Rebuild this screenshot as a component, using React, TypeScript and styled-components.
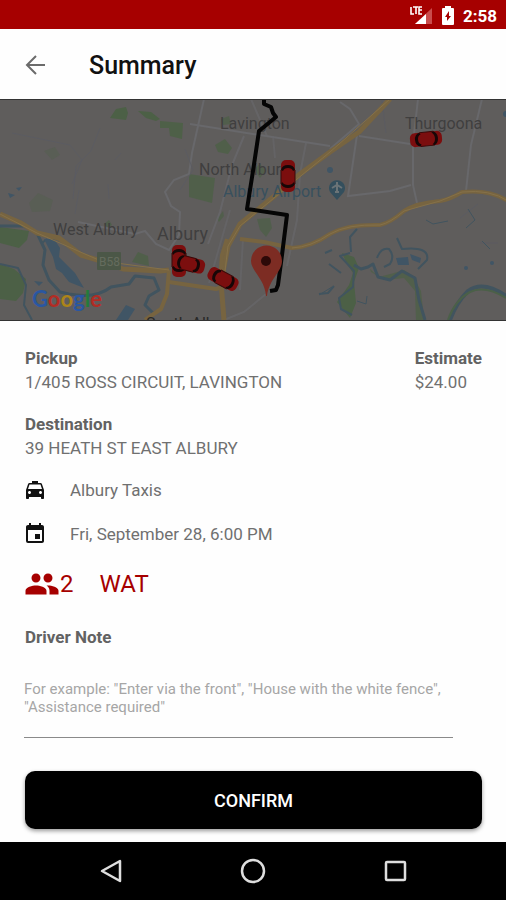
import React from "react";
import styled, { createGlobalStyle } from "styled-components";
import { MdLocalTaxi, MdEvent, MdPeople } from "react-icons/md";

const GlobalStyle = createGlobalStyle`
  *, *::before, *::after { box-sizing: border-box; }
  body { margin: 0; background: #fefefe; font-family: Roboto, "Liberation Sans", sans-serif; }
  button, textarea { font-family: inherit; }
`;

const Screen = styled.div`
  display: flex;
  flex-direction: column;
  min-height: 100vh;
  background: #fefefe;
`;

const StatusBar = styled.div`
  display: flex;
  align-items: center;
  justify-content: flex-end;
  gap: 9px;
  height: 29px;
  padding: 3px 9px 0 0;
  background: #a60000;
  color: #fff;
`;

const Clock = styled.time`
  font-size: 17px;
  line-height: 22px;
  font-weight: 700;
`;

const AppBar = styled.header`
  display: flex;
  align-items: center;
  gap: 41px;
  height: 70px;
  padding: 3px 24px 0 22px;
`;

const IconButton = styled.button`
  display: flex;
  align-items: center;
  justify-content: center;
  padding: 0;
  border: 0;
  background: none;
  color: inherit;
  cursor: pointer;
`;

const BackButton = styled(IconButton)`
  color: #6b6b6b;
`;

const Title = styled.h1`
  margin: 0;
  font-size: 25px;
  line-height: 32px;
  font-weight: 500;
  color: #111;
`;

const MapView = styled.svg`
  display: block;
  width: 100%;
  height: 222px;
  background: #5f5d5c;
  border-top: 1px solid #333;
  border-bottom: 1px solid #333;
`;

const MapLabel = styled.text<{ $size?: number; $tone?: string }>`
  font-family: Roboto, sans-serif;
  font-size: ${(p) => p.$size ?? 16}px;
  fill: ${(p) => p.$tone ?? "#403f3f"};
`;

const Logo = styled.text`
  font-family: Lato, sans-serif;
  font-size: 22px;
  font-weight: 700;
`;

const Details = styled.main`
  display: flex;
  flex-direction: column;
  flex: 1;
  padding: 25px 24px 12px 25px;
`;

const TripRow = styled.div`
  display: flex;
  justify-content: space-between;
  margin-bottom: 18px;
`;

const Field = styled.section`
  color: #707070;
`;

const FieldLabel = styled.h2`
  margin: 0;
  font-size: 17px;
  line-height: 24px;
  font-weight: 700;
  color: #626262;
`;

const FieldValue = styled.p`
  margin: 0;
  font-size: 17px;
  line-height: 24px;
`;

const InfoList = styled.div`
  display: flex;
  flex-direction: column;
  gap: 20px;
  margin-top: 18px;
`;

const InfoRow = styled.div`
  display: flex;
  align-items: center;
  gap: 23px;
  height: 24px;
  font-size: 17px;
  color: #707070;

  svg {
    flex: none;
    width: 24px;
    height: 24px;
    margin-left: -2px;
    color: #111;
  }
`;

const Passengers = styled.div`
  display: flex;
  align-items: center;
  gap: 26px;
  height: 36px;
  margin: 20px 0 23px;
  font-size: 24px;
  color: #a60000;
`;

const Count = styled.span`
  display: flex;
  align-items: center;

  svg {
    width: 36px;
    height: 36px;
    margin-left: -1px;
  }
`;

const NoteLabel = styled.label`
  font-size: 17px;
  line-height: 24px;
  font-weight: 700;
  color: #626262;
`;

const NoteInput = styled.textarea`
  display: block;
  width: calc(100% - 28px);
  height: 58px;
  margin: 31px 0 33px -1px;
  padding: 0;
  border: 0;
  border-bottom: 1px solid #8a8a8a;
  border-radius: 0;
  outline: 0;
  resize: none;
  overflow: hidden;
  background: transparent;
  font-size: 15px;
  line-height: 18px;
  color: #555;

  &::placeholder { color: #a6a6a6; opacity: 1; }
`;

const ConfirmButton = styled.button`
  width: 100%;
  height: 58px;
  border: 0;
  border-radius: 10px;
  background: #000;
  box-shadow: 0 2px 4px rgba(0, 0, 0, 0.4);
  color: #fff;
  font-size: 18px;
  font-weight: 500;
  cursor: pointer;
`;

const NavBar = styled.nav`
  display: grid;
  grid-template-columns: repeat(3, 1fr);
  height: 58px;
  padding: 0 40px;
  background: #000;
  color: #dedede;
`;

const Car = ({ x, y, angle }: { x: number; y: number; angle: number }) => (
  <g transform={`translate(${x} ${y}) rotate(${angle})`}>
    <rect x="-7" y="-16" width="14" height="32" rx="5" fill="#7b0e0e" />
    <path d="M-7-6Q-6-11 0-11Q6-11 7-6L5-5Q4-8 0-8Q-4-8-5-5Z" fill="#160707" />
    <path d="M-7 8Q-5 12 0 12Q5 12 7 8L6 6Q4 9 0 9Q-4 9-6 6Z" fill="#160707" />
    <path d="M-7-6V8M7-6V8" stroke="#3b0808" strokeWidth="1" />
  </g>
);

const TripMap = () => (
  <MapView viewBox="0 100 506 220" preserveAspectRatio="xMidYMid slice" role="img" aria-label="Trip map">
    <g fill="#4c6046">
      <path d="M110 118L116 109L126 107L128 113L126 120Z" />
      <path d="M138 111L151 112L160 119L156 121L146 118Z" />
      <path d="M0 227L29 231L27 240L19 248L0 243Z" />
      <path d="M0 264L14 269L26 279L23 293L16 301L0 299Z" />
      <path d="M132 262L138 252L148 256L149 266Z" opacity=".8" />
      <path d="M44 151L55 147L60 155L52 160ZM29 203L38 193L53 200L50 211L32 212Z" opacity=".3" />
      <path d="M160 121L183 123L182 139L170 136L169 128L160 128Z" opacity=".9" />
      <path d="M215 145L225 139L232 148L228 154L218 152Z" opacity=".8" />
      <path d="M189 174L215 178L212 203L189 197Z" opacity=".8" />
      <path d="M221 119L229 116L231 124L223 125ZM254 169L260 164L266 171L260 178ZM257 219L270 218L272 228L266 237L260 230ZM217 219L223 211L224 216L219 222ZM104 224L109 220L112 225L108 228Z" opacity=".7" />
      <path d="M342 253L354 257L359 268L354 282L356 303L350 318L337 302L349 285L353 273L347 264Z" />
      <path d="M370 269L379 277L394 273L404 270L413 276L421 291L424 320L416 320L415 291L404 278L385 280L371 272Z" opacity=".75" />
    </g>
    <g fill="none" stroke="#68686b" strokeWidth="2">
      <path d="M204 99L192 153L189 174L174 180L165 192L171 206L180 212L179 235L169 250L156 244L145 231L135 234L78 222" />
      <path d="M190 124L266 136L330 146M359 136L410 144" />
      <path d="M244 136L232 165L220 212L208 244" opacity=".8" />
      <path d="M306 143L300 174L297 220L287 266M267 136L251 99M266 294L244 312L224 320" opacity=".7" />
      <path d="M330 149L359 124L350 109L340 102M357 135L348 196L390 191L411 185M418 99L413 143L413 185L417 203M482 99L471 145L466 191" />
      <path d="M243 239L240 290M230 210L209 283M273 136L275 158" opacity=".6" />
    </g>
    <g fill="none" stroke="#5a5b63" strokeWidth="1" opacity=".8">
      <path d="M12 133L70 145L82 160L72 184M100 128L91 151L76 166L73 199M121 153L115 160M108 184L109 199M79 190L75 214M185 149L193 170L180 190M444 120L435 150M460 218L478 204M480 243H498M382 100L386 133" />
    </g>
    <g fill="none" stroke="#41545f" strokeLinejoin="round">
      <path d="M0 226H24L37 233L45 250L43 265L49 280L60 292L69 294Q96 299 111 287L129 284L135 276L154 278L159 290L149 296L145 305L153 313" strokeWidth="3" />
      <path d="M0 264L18 268L26 285L24 305L32 320M42 243L47 239" strokeWidth="2" />
      <path d="M350 253L340 256L354 271L353 287L339 298L341 309L352 315" strokeWidth="2" />
      <path d="M354 265L361 269L368 267L373 264L378 277L390 280L402 271L415 278L419 300L425 320" strokeWidth="3" />
      <path d="M450 320Q456 303 468 291Q483 280 506 296" strokeWidth="4" />
      <path d="M397 238L402 249Q430 246 427 260L418 269M377 258Q381 247 389 249Q395 256 390 264L384 267M357 229L350 237L351 252" strokeWidth="2" />
      <path d="M357 301L366 304L367 296M319 295L332 287M482 241L490 249M426 220L433 224L448 221M468 209L475 220L466 228" strokeWidth="1" />
      <path d="M329 264L341 273M325 253L332 250M334 286L328 293L319 294" strokeWidth="2" />
    </g>
    <g fill="#405565">
      <path d="M44 239L54 239L60 248L59 257L75 273L84 288L69 282L62 273L56 269L53 257ZM116 320L126 305L135 309L128 320ZM396 258L408 257L409 265L398 265ZM410 254L421 258L420 263L412 260ZM34 281L43 282L39 286ZM8 193L15 195L10 198ZM16 188L22 187L19 191Z" />
      <circle cx="466" cy="268" r="2" /><circle cx="492" cy="263" r="2" />
      <circle cx="506" cy="114" r="3" /><circle cx="330" cy="170" r="3" />
    </g>
    <path d="M448 320Q455 300 470 292Q485 285 506 298" fill="none" stroke="#4b6048" strokeWidth="2" />
    <g fill="none" stroke="#776440" strokeWidth="5" strokeLinejoin="round">
      <path d="M0 214L21 223L37 233L59 238L81 255L101 261L123 269L160 271L169 270" />
      <path d="M169 270L167 294L161 309L145 320M169 282L216 289L229 285" strokeWidth="4" />
      <path d="M390 99L359 132L330 152L300 174L272 198L240 224L228 246L221 282L224 320" />
      <path d="M240 239L264 242L292 248Q311 247 330 234Q347 224 380 225Q390 223 404 211Q416 203 440 201Q451 199 462 192Q490 189 508 201" strokeWidth="4" />
      <path d="M227 239L222 255L220 282" strokeWidth="4" />
    </g>
    <path d="M390 99L330 152L240 226L228 246L223 288M0 214L37 233L101 261L169 270M292 248Q311 247 330 234Q347 224 380 225Q390 223 404 211L440 201L462 192Q490 189 508 201" fill="none" stroke="#857149" strokeWidth="1" />
    <rect x="97" y="252" width="24" height="18" rx="1" fill="#4b5747" />
    <MapLabel $size={12} $tone="#656c5e" x="99" y="266">B58</MapLabel>

    <MapLabel x="53" y="235">West Albury</MapLabel>
    <MapLabel $size={18} x="157" y="240">Albury</MapLabel>
    <MapLabel x="220" y="129">Lavington</MapLabel>
    <MapLabel x="199" y="175">North Albury</MapLabel>
    <MapLabel x="405" y="129">Thurgoona</MapLabel>
    <MapLabel $tone="#38505e" x="223" y="197">Albury Airport</MapLabel>
    <MapLabel $tone="#292929" x="146" y="329">South Albury</MapLabel>
    <path d="M337 200L330 192A8 8 0 1 1 344 192Z" fill="#344f5d" />
    <path d="M337 182V192M332 188L337 185L342 188M335 192H339" fill="none" stroke="#6b7477" strokeWidth="2" />

    <path d="M264 99V104L271 107L273 113L276 117L259 131L253 171L247 209L287 215L282 255L278 285L276 290L270 291" fill="none" stroke="#050505" strokeWidth="4" strokeLinejoin="round" />
    <Car x={288} y={176} angle={0} />
    <Car x={179} y={261} angle={180} />
    <Car x={189} y={264} angle={104} />
    <Car x={223} y={279} angle={-62} />
    <Car x={426} y={139} angle={-96} />
    <path d="M266 296C265 279 251 271 251 261A15 15 0 0 1 282 261C282 272 269 279 267 296Z" fill="#7d2c23" />
    <circle cx="266" cy="261" r="5" fill="#2d0908" />
    <Logo x="32" y="307"><tspan fill="#2a57a1">G</tspan><tspan fill="#b22c24">o</tspan><tspan fill="#ac8419">o</tspan><tspan fill="#2a57a1">g</tspan><tspan fill="#247b3a">l</tspan><tspan fill="#b22c24">e</tspan></Logo>
  </MapView>
);

const SignalIcon = () => (
  <svg width="23" height="20" viewBox="0 0 23 20" fill="none" aria-label="LTE signal">
    <path d="M5 18L22 2V18Z" fill="#c94c4c" />
    <path d="M5 18L16 8V18Z" fill="#fff" />
    <path d="M0 0H14V9H0Z" fill="#a60000" />
    <path d="M1 1V8H4M3 1H8M6 1V8M12 1H9V8H12M9 4H12" stroke="#fff" strokeWidth="1.6" />
  </svg>
);

const BatteryIcon = () => (
  <svg width="12" height="20" viewBox="0 0 12 20" aria-label="Battery charging">
    <path d="M3 2V0H9V2H11Q12 2 12 3V18Q12 19 11 19H1Q0 19 0 18V3Q0 2 1 2Z" fill="#fff" />
    <path d="M7 5L3 11H5V15L9 10H7Z" fill="#a60000" />
  </svg>
);

const ThinArrow = () => (
  <svg width="26" height="26" viewBox="0 0 26 26" fill="none" stroke="currentColor" strokeWidth="2">
    <path d="M23 12H5M14 3L5 12L14 21" />
  </svg>
);

export default function App() {
  return (
    <>
      <GlobalStyle />
      <Screen>
        <StatusBar>
          <SignalIcon />
          <BatteryIcon />
          <Clock>2:58</Clock>
        </StatusBar>
        <AppBar>
          <BackButton aria-label="Back"><ThinArrow /></BackButton>
          <Title>Summary</Title>
        </AppBar>
        <TripMap />
        <Details>
          <TripRow>
            <Field>
              <FieldLabel>Pickup</FieldLabel>
              <FieldValue>1/405 ROSS CIRCUIT, LAVINGTON</FieldValue>
            </Field>
            <Field>
              <FieldLabel>Estimate</FieldLabel>
              <FieldValue>$24.00</FieldValue>
            </Field>
          </TripRow>
          <Field>
            <FieldLabel>Destination</FieldLabel>
            <FieldValue>39 HEATH ST EAST ALBURY</FieldValue>
          </Field>
          <InfoList>
            <InfoRow><MdLocalTaxi />Albury Taxis</InfoRow>
            <InfoRow><MdEvent />Fri, September 28, 6:00 PM</InfoRow>
          </InfoList>
          <Passengers>
            <Count><MdPeople />2</Count>
            <span>WAT</span>
          </Passengers>
          <NoteLabel htmlFor="driver-note">Driver Note</NoteLabel>
          <NoteInput
            id="driver-note"
            placeholder={'For example: "Enter via the front", "House with the white fence", "Assistance required"'}
          />
          <ConfirmButton>CONFIRM</ConfirmButton>
        </Details>
        <NavBar aria-label="System">
          <IconButton aria-label="Back">
            <svg width="26" height="26" viewBox="0 0 26 26" fill="none" stroke="currentColor" strokeWidth="2.5" strokeLinejoin="round"><path d="M22 3V23L4 13Z" /></svg>
          </IconButton>
          <IconButton aria-label="Home">
            <svg width="26" height="26" viewBox="0 0 26 26" fill="none" stroke="currentColor" strokeWidth="2.5"><circle cx="13" cy="13" r="11" /></svg>
          </IconButton>
          <IconButton aria-label="Recent apps">
            <svg width="26" height="26" viewBox="0 0 26 26" fill="none" stroke="currentColor" strokeWidth="2.5"><rect x="4" y="4" width="19" height="18" rx="1" /></svg>
          </IconButton>
        </NavBar>
      </Screen>
    </>
  );
}
